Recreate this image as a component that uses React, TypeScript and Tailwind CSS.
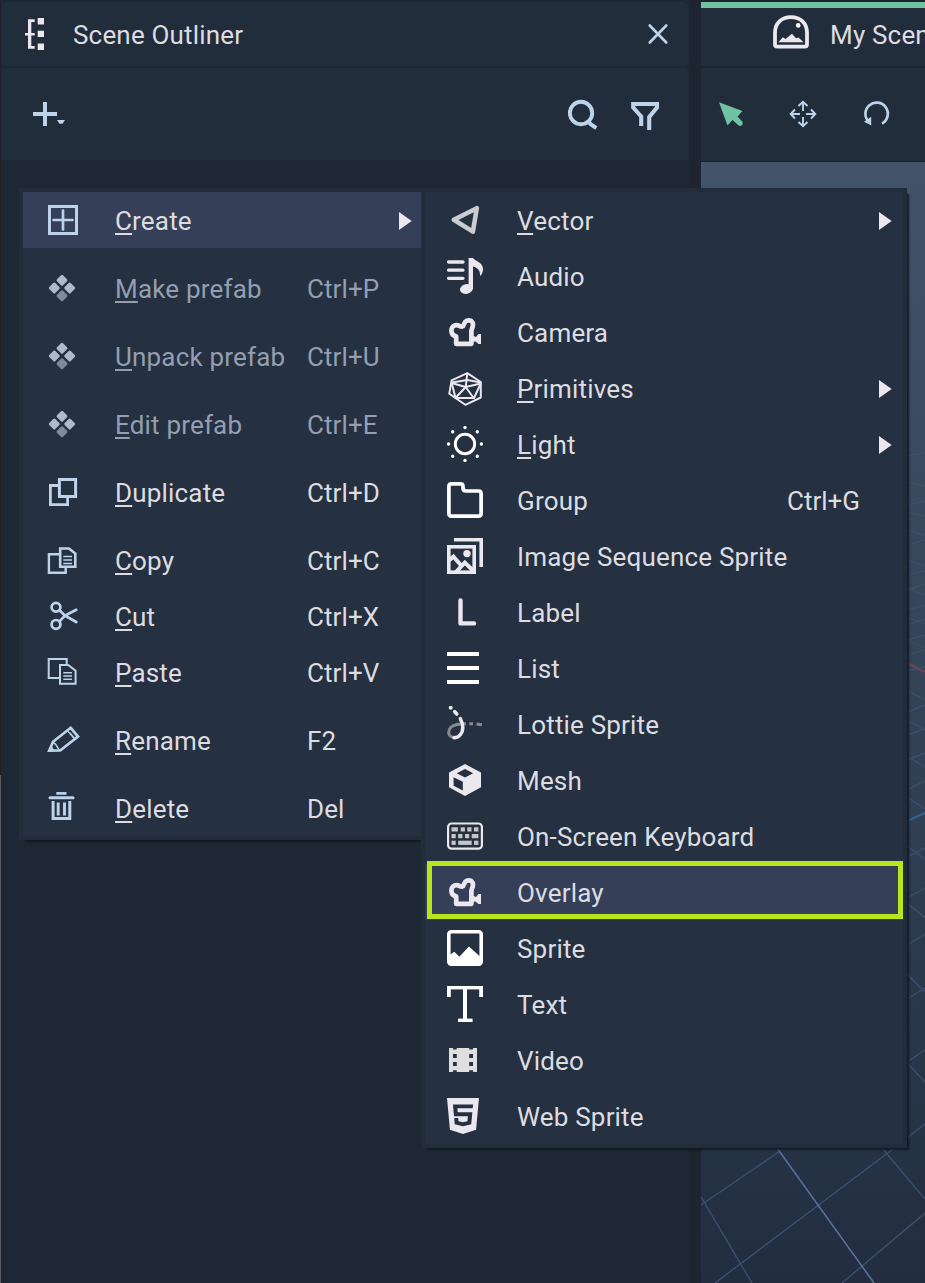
import React from "react";
import { FaHtml5 } from "react-icons/fa";

type IconProps = { children: React.ReactNode; color?: string };

function Icon({ children, color = "#ebe7ef" }: IconProps) {
  return (
    <svg width="36" height="36" viewBox="0 0 36 36" fill="none" stroke={color} className="block shrink-0">
      {children}
    </svg>
  );
}

const BLUE = "#bdd3ea";
const LIGHT = "#ebe7ef";

const CreateIcon = () => (
  <Icon color={BLUE}>
    <rect x="4.5" y="4.5" width="27" height="27" strokeWidth="3" />
    <path d="M18 8.5V27.5M8.5 18H27.5" strokeWidth="2.7" strokeLinecap="round" />
  </Icon>
);

const PrefabIcon = () => (
  <Icon color="none">
    {[
      [17, 10.3, "#aebaca"],
      [9.3, 18, "#aebaca"],
      [24.7, 18, "#aebaca"],
      [17, 25.7, "#7f8b9a"],
    ].map(([x, y, c], i) => (
      <rect key={i} x={Number(x) - 4.3} y={Number(y) - 4.3} width="8.6" height="8.6" rx="1.5" fill={String(c)} transform={`rotate(45 ${x} ${y})`} />
    ))}
  </Icon>
);

const DuplicateIcon = () => (
  <Icon color={BLUE}>
    <path d="M13 11.5H5.4V30.6H22.6V23" strokeWidth="2.8" />
    <rect x="14.4" y="5.5" width="16.2" height="17" strokeWidth="3" />
  </Icon>
);

const CopyIcon = () => (
  <Icon color={BLUE}>
    <path d="M14.5 12.2H3.9V30.8H20.7V26" strokeWidth="2.4" />
    <path d="M15.2 6.5H24L30.3 11.6V24.7H15.2Z" strokeWidth="2.6" />
    <path d="M18.3 14.6H27M18.3 18H27M18.3 21.4H27" strokeWidth="1.5" />
  </Icon>
);

const CutIcon = () => (
  <Icon color={BLUE}>
    <circle cx="11" cy="9.2" r="4.4" strokeWidth="2.7" />
    <circle cx="11" cy="26.4" r="4.4" strokeWidth="2.7" />
    <path d="M14.5 12.2L20 17.6L31.3 24M14.5 23.4L20 17.6L31.3 11.8" strokeWidth="2.7" strokeLinecap="round" />
  </Icon>
);

const PasteIcon = () => (
  <Icon color={BLUE}>
    <path d="M14 24H3.7V4.9H21.7V10.5" strokeWidth="2" />
    <path d="M15 11H23.2L30.6 16.8V29.7H15Z" strokeWidth="2" />
    <path d="M18.3 18.7H27M18.3 22H27M18.3 25.3H27" strokeWidth="1.4" />
  </Icon>
);

const RenameIcon = () => (
  <Icon color={BLUE}>
    <path d="M4.2 28.7L8 19.8L25.7 5.8L33 14.6L15.2 28.5Z" strokeWidth="2.7" />
    <path d="M22.3 8.7L29.8 17.4M24.6 10.5L29.3 16" strokeWidth="1.2" />
    <path d="M8 20.5L10.5 22L14.5 28.3" strokeWidth="1.5" />
    <path d="M3.5 29.5L6.5 24L9 28.6Z" strokeWidth="0.5" fill={BLUE} />
  </Icon>
);

const DeleteIcon = () => (
  <Icon color={BLUE}>
    <path d="M11.3 3.4H21.5" strokeWidth="2.7" />
    <path d="M5 7.8H28" strokeWidth="3" strokeLinecap="round" />
    <path d="M8.1 11V28.4H24.8V11" strokeWidth="3" />
    <path d="M13.2 12.5V25.6M19.5 12.5V25.6" strokeWidth="2.9" />
  </Icon>
);

const VectorIcon = () => (
  <Icon color="#c9cdd0">
    <path d="M6.8 17.7L29.8 6.2L25.9 29.6Z" strokeWidth="4.6" strokeLinejoin="round" />
  </Icon>
);

const AudioIcon = () => (
  <Icon>
    <path d="M1.6 4H16M1.6 12.2H16M1.6 20.3H16" strokeWidth="3.3" strokeLinecap="round" />
    <ellipse cx="19.4" cy="31" rx="6.5" ry="4.8" fill={LIGHT} stroke="none" transform="rotate(-12 19.4 31)" />
    <path d="M21.6 0H26C27.5 3 36 4 36 11C36 14 35 16.5 33 18C33.5 13 31 9.5 26 8.5V31H21.6Z" fill={LIGHT} stroke="none" />
  </Icon>
);

const CameraIcon = () => (
  <Icon>
    <path
      d="M9.2 29.8V22.6C5.9 21.6 4.2 19.3 4.4 16.2C4.6 12.8 7.2 10.8 10.1 11.2C12.1 11.4 13.4 13 15.2 12.5C17.2 12 16.7 9.7 18.2 7.9C20.1 5.9 23.9 5.8 25.5 8.4C27.2 11.2 24.6 14.3 24.4 17V29.8Z"
      strokeWidth="4.7"
      strokeLinejoin="round"
    />
    <path d="M25 21.5L29 23L31.5 20L34 20V30L31.5 30L28.5 27.5L25 28Z" fill={LIGHT} stroke="none" />
  </Icon>
);

const PrimitivesIcon = () => (
  <Icon>
    <g strokeWidth="2" strokeLinejoin="round">
      <path d="M20.3 3.2L33.8 12V27.5L18.3 34.8L2.3 23.7L4.6 10.3Z" />
      <path d="M20.3 3.2L18.7 17M4.6 13L18.7 17L33.8 13.5M18.7 17L8.5 28M18.7 17L27 28.5" />
      <path d="M4.6 12.5L8.5 28H27L33.8 13.5M4.6 12.5L20.3 10M33.8 12.5L20.3 10" />
    </g>
  </Icon>
);

const LightIcon = () => (
  <Icon color="#ffffff">
    <circle cx="18" cy="18" r="9.7" strokeWidth="2.9" />
    {[0, 45, 90, 135, 180, 225, 270, 315].map((a) => (
      <circle key={a} cx="18" cy={a % 90 === 0 ? 1.6 : 0.6} r="1.7" fill="#fff" stroke="none" transform={`rotate(${a} 18 18)`} />
    ))}
  </Icon>
);

const GroupIcon = () => (
  <Icon color="#ffffff">
    <path d="M4.5 1.9H13.5Q16 1.9 16 4.4V6Q16 9 19 9H31.5Q34.1 9 34.1 11.6V31.5Q34.1 34.1 31.5 34.1H4.5Q1.9 34.1 1.9 31.5V4.5Q1.9 1.9 4.5 1.9Z" strokeWidth="3.7" />
  </Icon>
);

const SequenceIcon = () => (
  <Icon>
    <path d="M7 1.8H34.2V29" strokeWidth="3.6" />
    <rect x="1.8" y="8.8" width="25.4" height="25.4" strokeWidth="3.6" />
    <circle cx="20" cy="15.6" r="3.7" fill={LIGHT} stroke="none" />
    <path d="M2 22.5L6.4 18.6L15.5 29M8 35L17.8 24.6L27 33.5" strokeWidth="4" />
  </Icon>
);

const LabelIcon = () => (
  <Icon>
    <polyline points="13.5,6.5 13.5,29.4 27,29.4" strokeWidth="4.4" strokeLinecap="round" strokeLinejoin="round" />
  </Icon>
);

const ListIcon = () => (
  <Icon color="#ffffff">
    <path d="M0 4H32M0 18H32M0 32H32" strokeWidth="4" />
  </Icon>
);

const LottieIcon = () => (
  <Icon>
    <path d="M7.5 31.5C1 31 0.5 25.5 3.5 21.8C6.5 18.3 12 18 19 17.8M22.3 17.7H26M29.5 18L35 18.8" stroke="#87898c" strokeWidth="3" />
    <circle cx="3.7" cy="1.8" r="2" fill={LIGHT} stroke="none" />
    <path d="M7.7 5.7L9.8 8" strokeWidth="3.6" strokeLinecap="round" />
    <path d="M13.3 12.5C16 18 17 24 13.5 28.5C12 30.4 9.8 31.7 7 31.7" strokeWidth="3.5" strokeLinecap="round" />
  </Icon>
);

const MeshIcon = () => (
  <Icon>
    <path
      d="M18 2L34 10.4V25.2L18 34L2 25.2V10.4ZM18 6.9L9.8 11.2L18 15.5L26.2 11.2ZM6.6 15.2V23.8L15.8 28.4V19.8Z"
      fill={LIGHT}
      fillRule="evenodd"
      stroke="none"
    />
  </Icon>
);

const KEYS = [
  [4.5, 9.3, 6.4], [13.7, 9.3, 4.2], [20.3, 9.3, 4.2], [27, 9.3, 4.4],
  [4.5, 16, 4.2], [11.2, 16, 4.2], [18, 16, 4.2], [24.7, 16, 6.7],
  [4.5, 22.7, 4.2], [11.2, 22.7, 13.5], [27, 22.7, 4.4],
];

const KeyboardIcon = () => (
  <Icon>
    <rect x="1.1" y="5.5" width="33.8" height="25.2" rx="3.5" strokeWidth="2.2" />
    {KEYS.map(([x, y, w]) => (
      <rect key={`${x}-${y}`} x={x} y={y} width={w} height="4.2" fill="#c6c6c8" stroke="none" />
    ))}
  </Icon>
);

const SpriteIcon = () => (
  <Icon color="#ffffff">
    <rect x="1.8" y="1.8" width="32.4" height="32.4" rx="2.4" strokeWidth="3.6" />
    <path d="M2 25.5L7.3 21.7L12.3 26.7L22 16.5L33.5 27V34H2Z" fill="#fff" stroke="none" />
  </Icon>
);

const TextIcon = () => (
  <Icon color="none">
    <g fill="#fff">
      <rect x="0" y="0" width="36" height="3.4" />
      <rect x="0" y="0" width="3.8" height="11" />
      <rect x="32.2" y="0" width="3.8" height="11" />
      <rect x="16" y="0" width="4" height="34" />
      <rect x="11" y="32.6" width="14.6" height="3.4" />
    </g>
  </Icon>
);

const VideoIcon = () => (
  <Icon color="none">
    <path
      d="M2 6H30V30H2ZM6 6V7.6H9.8V6ZM6 12V15.9H9.8V12ZM6 20V24H9.8V20ZM6 28.3V30H9.8V28.3ZM22.2 6V7.6H26V6ZM22.2 12V15.9H26V12ZM22.2 20V24H26V20ZM22.2 28.3V30H26V28.3Z"
      fill="#dfdfdf"
      fillRule="evenodd"
    />
  </Icon>
);

const WebIcon = () => (
  <FaHtml5 viewBox="0 32 384 448" preserveAspectRatio="none" className="block h-9 w-8 shrink-0 text-[#ebe7ef]" />
);

const Arrow = () => (
  <svg width="13" height="18" viewBox="0 0 13 18" className="block">
    <path d="M0 0L12.7 9L0 18Z" fill={LIGHT} />
  </svg>
);

type Item = {
  label: string;
  icon: () => React.ReactElement;
  mnemonic?: boolean;
  keys?: string;
  disabled?: boolean;
  active?: boolean;
  submenu?: boolean;
};

const contextGroups: Item[][] = [
  [{ label: "Create", icon: CreateIcon, mnemonic: true, active: true, submenu: true }],
  [{ label: "Make prefab", icon: PrefabIcon, mnemonic: true, keys: "Ctrl+P", disabled: true }],
  [{ label: "Unpack prefab", icon: PrefabIcon, mnemonic: true, keys: "Ctrl+U", disabled: true }],
  [{ label: "Edit prefab", icon: PrefabIcon, mnemonic: true, keys: "Ctrl+E", disabled: true }],
  [{ label: "Duplicate", icon: DuplicateIcon, mnemonic: true, keys: "Ctrl+D" }],
  [
    { label: "Copy", icon: CopyIcon, mnemonic: true, keys: "Ctrl+C" },
    { label: "Cut", icon: CutIcon, mnemonic: true, keys: "Ctrl+X" },
    { label: "Paste", icon: PasteIcon, mnemonic: true, keys: "Ctrl+V" },
  ],
  [{ label: "Rename", icon: RenameIcon, mnemonic: true, keys: "F2" }],
  [{ label: "Delete", icon: DeleteIcon, mnemonic: true, keys: "Del" }],
];

const createItems: Item[] = [
  { label: "Vector", icon: VectorIcon, mnemonic: true, submenu: true },
  { label: "Audio", icon: AudioIcon },
  { label: "Camera", icon: CameraIcon },
  { label: "Primitives", icon: PrimitivesIcon, mnemonic: true, submenu: true },
  { label: "Light", icon: LightIcon, mnemonic: true, submenu: true },
  { label: "Group", icon: GroupIcon, keys: "Ctrl+G" },
  { label: "Image Sequence Sprite", icon: SequenceIcon },
  { label: "Label", icon: LabelIcon },
  { label: "List", icon: ListIcon },
  { label: "Lottie Sprite", icon: LottieIcon },
  { label: "Mesh", icon: MeshIcon },
  { label: "On-Screen Keyboard", icon: KeyboardIcon },
  { label: "Overlay", icon: CameraIcon, active: true },
  { label: "Sprite", icon: SpriteIcon },
  { label: "Text", icon: TextIcon },
  { label: "Video", icon: VideoIcon },
  { label: "Web Sprite", icon: WebIcon },
];

function Label({ item }: { item: Item }) {
  if (!item.mnemonic) return <>{item.label}</>;
  return (
    <>
      <span className="underline decoration-2 underline-offset-[3px] [text-decoration-skip-ink:none]">{item.label[0]}</span>
      {item.label.slice(1)}
    </>
  );
}

function ContextRow({ item }: { item: Item }) {
  const Glyph = item.icon;
  return (
    <div className={`flex h-14 items-center pl-[22px] ${item.active ? "bg-[#354058]" : ""} ${item.disabled ? "text-[#939fb0]" : "text-[#dddce1]"}`}>
      <Glyph />
      <span className="ml-[34px] w-48 pt-[2px]"><Label item={item} /></span>
      {item.keys && <span className="pt-[2px] tracking-[0.08px]">{item.keys}</span>}
      {item.submenu && <span className="mr-[9px] ml-auto pt-[2px]"><Arrow /></span>}
    </div>
  );
}

function CreateRow({ item }: { item: Item }) {
  const Glyph = item.icon;
  return (
    <div className={`flex h-14 items-center pl-[22px] text-[#dddce1] ${item.active ? "bg-[#354058]" : ""}`}>
      <span className="w-9"><Glyph /></span>
      <span className="ml-[34px] w-[270px] whitespace-nowrap pt-[2px]"><Label item={item} /></span>
      {item.keys && <span className="pt-[2px] tracking-normal">{item.keys}</span>}
      {item.submenu && <span className="mr-[11px] ml-auto pt-[2px]"><Arrow /></span>}
    </div>
  );
}

const GRID_LINES = [
  "M701 1205L783 1149", "M715 1283L893 1149", "M908 1137L925 1124", "M842 1283L925 1213",
  "M701 1197L752 1283", "M882 1148L925 1199",
  "M907 610L925 605", "M907 640L925 635", "M907 671L925 667", "M907 712L925 705", "M907 735L925 729",
  "M907 760L925 753", "M907 790L925 781", "M907 857L925 848", "M907 898L925 888", "M907 945L925 934",
  "M907 999L925 988", "M907 1062L925 1050",
  "M907 690L925 700", "M907 720L925 730", "M907 756L925 767", "M907 797L925 809", "M907 846L925 859",
  "M907 903L925 918", "M907 974L925 992", "M907 1063L925 1082",
];

const FAR_LINES = [
  "M907 456L925 453", "M907 482L925 486", "M907 505L925 501", "M907 512L925 516", "M907 530L925 535",
  "M907 545L925 540", "M907 560L925 566", "M907 575L925 571", "M907 590L925 584", "M907 588L925 595",
  "M907 617L925 624", "M907 625L925 619", "M907 640L925 648", "M907 655L925 650",
];

function Viewport() {
  return (
    <div className="mt-px min-h-0 flex-1 bg-linear-to-b from-[#43536a] from-0% via-[#303f53] via-60% to-[#222d3f] to-100%">
      <svg width="224" height="1121" viewBox="701 162 224 1121" fill="none" className="block">
        {GRID_LINES.map((d) => <path key={d} d={d} stroke="#3d4f6e" strokeWidth="1.4" />)}
        {FAR_LINES.map((d) => <path key={d} d={d} stroke="#4a5e80" strokeWidth="1" opacity="0.45" />)}
        <path d="M777 1148L874 1283" stroke="#5873a3" strokeWidth="1.5" />
        <path d="M907 663L925 672" stroke="#6b4750" strokeWidth="2" />
        <path d="M907 821L925 813" stroke="#2f648e" strokeWidth="2.2" />
      </svg>
    </div>
  );
}

export default function App() {
  return (
    <div className="relative flex h-[1283px] w-[925px] overflow-hidden bg-[#1e2430] font-[Roboto,sans-serif] text-[26px] leading-8 tracking-[0.18px] text-[#dddce1]">
      <div className="flex w-px flex-col">
        <div className="h-[775px] bg-[#202022]" />
        <div className="flex-1 bg-[#555a60]" />
      </div>

      <div className="flex w-[688px] flex-col bg-[#1d2834] pt-[2px]">
        <header className="flex h-16 items-center rounded-md bg-[#222d3c] pr-5 pl-[23px]">
          <svg width="22" height="34" viewBox="24 17 22 34" fill={LIGHT}>
            <path d="M28 19.3H34.7V22H31.3V33H34.7V35.6H31.3V46H34.7V48.8H28V35.6H25V33H28Z" />
            <path d="M37.7 18H44V24.4H37.7ZM37.7 30.8H44V37.1H37.7ZM37.7 43.6H44V50H37.7Z" />
          </svg>
          <h1 className="ml-[27px] pt-[2px]">Scene Outliner</h1>
          <svg width="22" height="22" viewBox="647 23 22 22" className="ml-auto" stroke={BLUE} strokeWidth="2.6" strokeLinecap="round">
            <path d="M649.7 25.5L666.3 42.5M666.3 25.5L649.7 42.5" />
          </svg>
        </header>
        <div className="mt-[2px] flex h-[92px] items-center rounded-t-md bg-[#222d3c] pr-[29px] pl-[31px]">
          <svg width="34" height="28" viewBox="32 100 34 28" fill="none" stroke={BLUE}>
            <path d="M45 102V126M33 114H57" strokeWidth="4" />
            <path d="M57 120H65L62.5 123.8H59.5Z" fill={BLUE} stroke="none" />
          </svg>
          <div className="ml-auto flex gap-8">
            <svg width="30" height="32" viewBox="569 98 30 32" fill="none" stroke={BLUE} strokeWidth="3.9">
              <circle cx="582" cy="113" r="11.2" />
              <path d="M588.5 121L592 124.5L597.3 128" />
            </svg>
            <svg width="30" height="32" viewBox="630 98 30 32" fill="none" stroke={BLUE} strokeWidth="4.1">
              <path d="M641.2 126V116.5L633.2 107.5V104H657V107.5L649.2 117V130" />
            </svg>
          </div>
        </div>
      </div>

      <div className="w-3" />

      <div className="flex min-w-0 flex-1 flex-col pt-[2px]">
        <div className="h-1.5 bg-[#70c2a1]" />
        <header className="flex h-[58px] items-center bg-[#222d3c] pl-[71px] whitespace-nowrap">
          <svg width="38" height="36" viewBox="772 14 38 36" fill="none" className="-mt-2.5 shrink-0">
            <path d="M775 44.5V33C775 23 781.5 17.2 791 17.2S807 23 807 33V44.5Q807 46.7 804.8 46.7H777.2Q775 46.7 775 44.5Z" stroke={LIGHT} strokeWidth="3.8" />
            <circle cx="798.2" cy="25.4" r="2.3" fill="#fff" />
            <path d="M778.5 42.2L782.8 37.3L785.5 39L792 33.8L796 38.3L798.5 37.5L803.5 42.2Z" fill={LIGHT} />
          </svg>
          <span className="ml-5 -mt-1">My Scene</span>
        </header>
        <div className="mt-[2px] flex h-[93px] items-center bg-[#222d3c] pb-px pl-[17px]">
          <svg width="26" height="26" viewBox="718 101 26 26" fill="#6fc2a2" className="shrink-0">
            <path d="M719 102.3L742.5 111L737.5 116.5L742.5 121.8Q743.5 124 741.5 125.5Q739.5 126.5 738 125L732.5 120L727.5 125.5Z" />
          </svg>
          <svg width="28" height="28" viewBox="789 100 28 28" fill="none" stroke={BLUE} strokeWidth="1.9" className="ml-[45px] shrink-0">
            <path d="M803 102V111M803 117V126M791 114H800M806 114H815M798.5 106L803 101.7L807.5 106M798.5 122L803 126.3L807.5 122M795 109.5L790.7 114L795 118.5M811 109.5L815.3 114L811 118.5" />
          </svg>
          <svg width="28" height="28" viewBox="863 100 28 28" fill="none" stroke={BLUE} strokeWidth="2.7" className="ml-[46px] shrink-0">
            <path d="M868.8 121.8A11.2 11.2 0 1 1 882 123.6" />
            <path d="M864 121.8L871.2 116.8V125.5L868.5 124Z" fill={BLUE} stroke="none" />
          </svg>
        </div>
        <Viewport />
      </div>

      <nav className="absolute top-[188px] left-[19px] w-[402px] bg-[#222d3b] py-1 pl-1 shadow-[4px_4px_2px_-2px_#121a24]">
        <div className="flex flex-col gap-3 bg-[#253040]">
          {contextGroups.map((group) => (
            <div key={group[0].label}>
              {group.map((item) => <ContextRow key={item.label} item={item} />)}
            </div>
          ))}
        </div>
      </nav>

      <nav className="absolute top-[188px] left-[421px] w-[486px] bg-[#222d3b] p-1 shadow-[4px_4px_2px_-2px_#121a24]">
        <div className="bg-[#253040]">
          {createItems.map((item) => <CreateRow key={item.label} item={item} />)}
        </div>
      </nav>

      <div className="pointer-events-none absolute top-[861px] left-[427px] h-[58px] w-[476px] border-5 border-[#b8e61d]" />
    </div>
  );
}
